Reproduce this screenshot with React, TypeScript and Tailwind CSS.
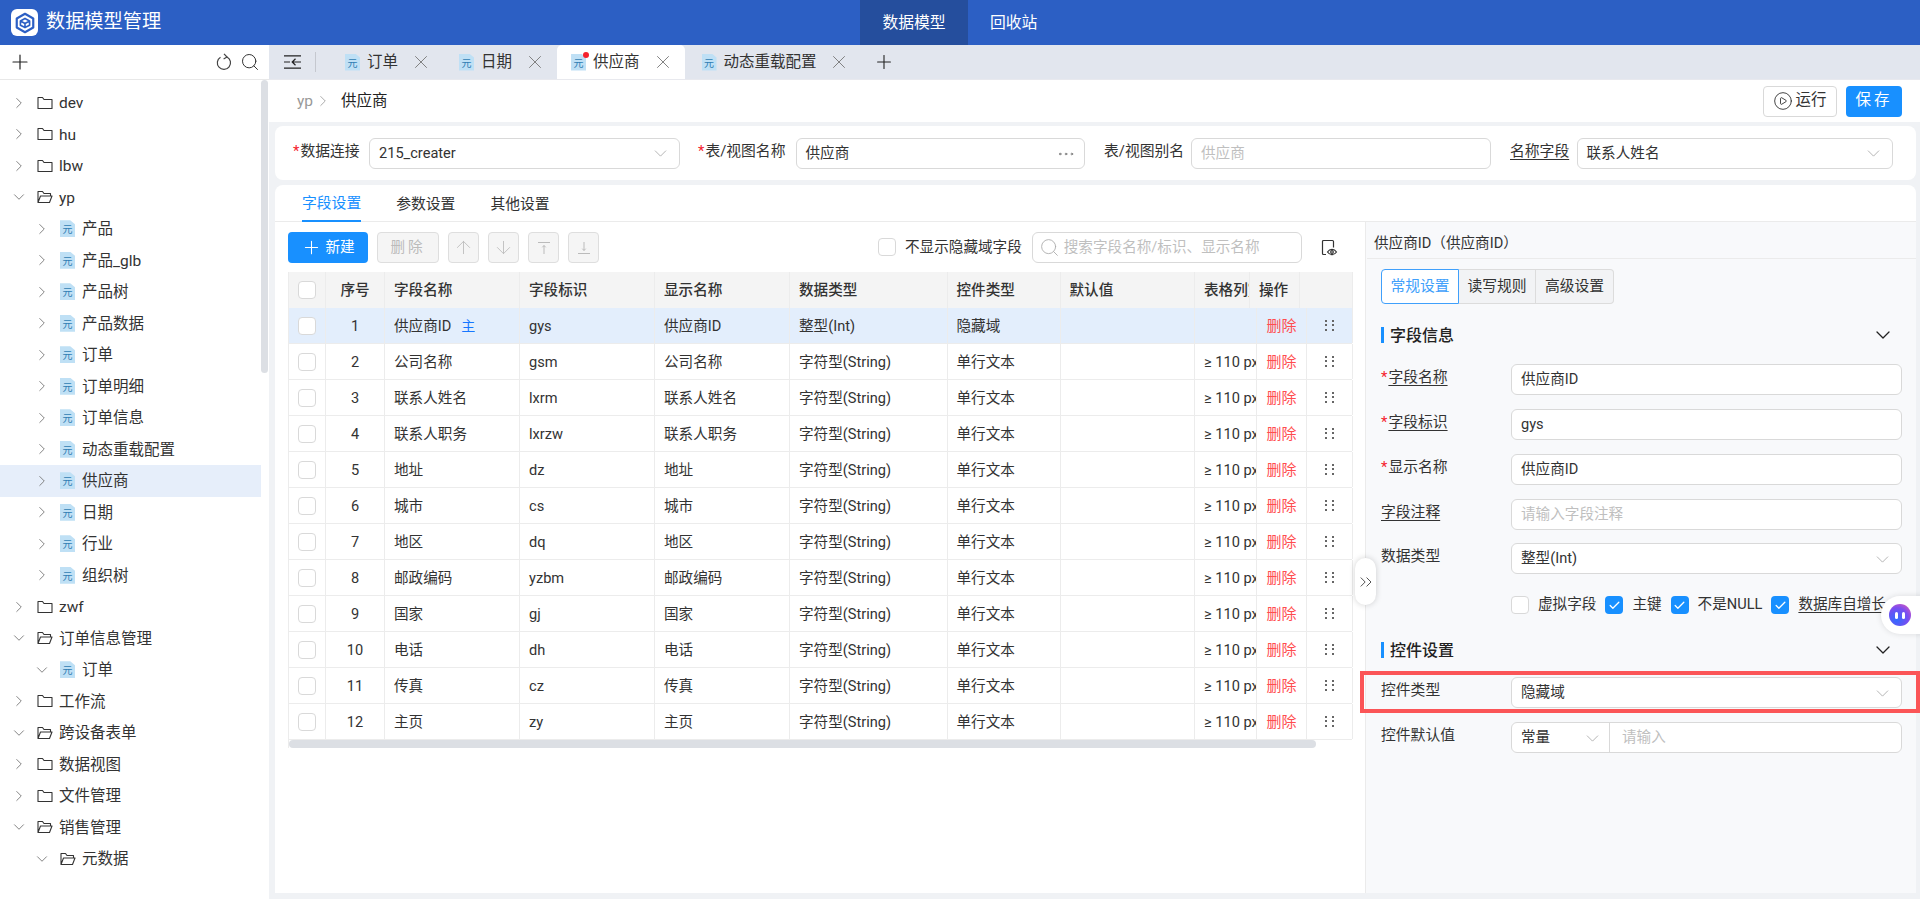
import { ArrowDown, ArrowUp, Check, ChevronDown, ChevronRight, ChevronsRight, CirclePlay, Ellipsis, Plus, Search, X } from "lucide-react";

type TreeItem = { label: string; depth: number; kind: "folder" | "file"; open?: boolean; selected?: boolean };

const tree: TreeItem[] = [
  { label: "dev", depth: 0, kind: "folder" },
  { label: "hu", depth: 0, kind: "folder" },
  { label: "lbw", depth: 0, kind: "folder" },
  { label: "yp", depth: 0, kind: "folder", open: true },
  { label: "产品", depth: 1, kind: "file" },
  { label: "产品_glb", depth: 1, kind: "file" },
  { label: "产品树", depth: 1, kind: "file" },
  { label: "产品数据", depth: 1, kind: "file" },
  { label: "订单", depth: 1, kind: "file" },
  { label: "订单明细", depth: 1, kind: "file" },
  { label: "订单信息", depth: 1, kind: "file" },
  { label: "动态重载配置", depth: 1, kind: "file" },
  { label: "供应商", depth: 1, kind: "file", selected: true },
  { label: "日期", depth: 1, kind: "file" },
  { label: "行业", depth: 1, kind: "file" },
  { label: "组织树", depth: 1, kind: "file" },
  { label: "zwf", depth: 0, kind: "folder" },
  { label: "订单信息管理", depth: 0, kind: "folder", open: true },
  { label: "订单", depth: 1, kind: "file", open: true },
  { label: "工作流", depth: 0, kind: "folder" },
  { label: "跨设备表单", depth: 0, kind: "folder", open: true },
  { label: "数据视图", depth: 0, kind: "folder" },
  { label: "文件管理", depth: 0, kind: "folder" },
  { label: "销售管理", depth: 0, kind: "folder", open: true },
  { label: "元数据", depth: 1, kind: "folder", open: true },
];

const rows = [
  ["供应商ID", "gys"],
  ["公司名称", "gsm"],
  ["联系人姓名", "lxrm"],
  ["联系人职务", "lxrzw"],
  ["地址", "dz"],
  ["城市", "cs"],
  ["地区", "dq"],
  ["邮政编码", "yzbm"],
  ["国家", "gj"],
  ["电话", "dh"],
  ["传真", "cz"],
  ["主页", "zy"],
];

const cell = "h-full flex items-center border-r border-[#ececec] overflow-hidden whitespace-nowrap";

function FolderIcon({ open }: { open?: boolean }) {
  return (
    <svg width="16" height="14" viewBox="0 0 16 14" fill="none" stroke="#333" strokeWidth="1.1" className="shrink-0">
      {open ? (
        <path d="M1 12.500V1.500h4.500l1.500 2h6.500v2.500M1 12.500h11.500L15 6H3.500L1 12.500z" strokeLinejoin="round" />
      ) : (
        <path d="M1 12.500V1.500h4.500l1.500 2h8v9H1z" strokeLinejoin="round" />
      )}
    </svg>
  );
}

function FileIcon() {
  return (
    <span className="shrink-0 w-[15px] h-[17px] bg-[#bfe0f5] flex items-end justify-center pb-[1px] text-[10px] leading-[12px] text-[#2f7db3] [clip-path:polygon(0_0,68%_0,100%_24%,100%_100%,0_100%)]">
      元
    </span>
  );
}

function TreeRow({ item }: { item: TreeItem }) {
  return (
    <div className={`h-[31.500px] flex items-center text-[15.500px] text-[#333] ${item.selected ? "bg-[#e6eefa]" : ""} ${item.depth ? "pl-[32px]" : "pl-[9px]"}`}>
      <span className="w-[20px] shrink-0 flex justify-center">
        {item.open ? <ChevronDown size={18} strokeWidth={1.2} color="#777" /> : <ChevronRight size={18} strokeWidth={1.2} color="#777" />}
      </span>
      <span className="flex ml-[8px] mr-[6px]">{item.kind === "file" ? <FileIcon /> : <FolderIcon open={item.open} />}</span>
      <span className={`pt-[2px] ${item.kind === "file" ? "ml-[1px]" : ""}`}>{item.label}</span>
    </div>
  );
}

function Logo() {
  return (
    <span className="w-[27px] h-[27px] rounded-[6px] bg-white flex items-center justify-center shrink-0">
      <svg width="22" height="22" viewBox="0 0 24 24" fill="none" stroke="#2c5fc4" strokeWidth="2.400" strokeLinejoin="round">
        <path d="M12 2l9 5v10l-9 5-9-5V7l9-5z" />
        <path d="M12 7l5 2.800v4.600L12 17l-5-2.600V9.800L12 7zM7 9.800l5 2.800 5-2.800M12 12.600V17" strokeWidth="1.800" />
      </svg>
    </span>
  );
}

function RefreshIcon() {
  return (
    <svg width="16" height="18" viewBox="0 0 16 18" fill="none" stroke="#444" strokeWidth="1.200">
      <path d="M4.500 4.200A6.600 6.600 0 1 0 11 4" />
      <path d="M8 .800L11 4 7.600 6" strokeLinejoin="round" />
    </svg>
  );
}

function CollapseIcon() {
  return (
    <svg width="17" height="14" viewBox="0 0 17 14" fill="none" stroke="#222" strokeWidth="1.200">
      <path d="M0 .800h17M0 13.200h17M0 7h6M17 7H8.500M11.500 3.800L8.200 7l3.300 3.200" />
    </svg>
  );
}

function EyePhoneIcon() {
  return (
    <svg width="17" height="17" viewBox="0 0 17 17" fill="none" stroke="#333" strokeWidth="1.200">
      <path d="M5 15.500H2.500a1 1 0 0 1-1-1v-12a1 1 0 0 1 1-1h9a1 1 0 0 1 1 1v6" />
      <path d="M6.500 13c1.200-1.800 2.800-2.600 4.500-2.600s3.300.800 4.500 2.600c-1.200 1.800-2.800 2.600-4.500 2.600S7.700 14.800 6.500 13z" />
      <circle cx="11" cy="13" r="1.300" />
    </svg>
  );
}

function ToTopIcon() {
  return (
    <svg width="14" height="14" viewBox="0 0 14 14" fill="none" stroke="#bbb" strokeWidth="1">
      <path d="M1 1.500h12M7 4.500v8.500M5.300 6.300L7 4.500l1.700 1.800" />
    </svg>
  );
}

function ToBottomIcon() {
  return (
    <svg width="14" height="14" viewBox="0 0 14 14" fill="none" stroke="#bbb" strokeWidth="1">
      <path d="M1 12.500h12M7 1v8.500M5.300 7.700L7 9.500l1.700-1.800" />
    </svg>
  );
}

function DragDots() {
  return (
    <span className="grid grid-cols-2 gap-x-[5px] gap-y-[2.500px]">
      {[0, 1, 2, 3, 4, 5].map((i) => (
        <span key={i} className="w-[2px] h-[2px] bg-[#666]" />
      ))}
    </span>
  );
}

function Box({ checked }: { checked?: boolean }) {
  return checked ? (
    <span className="shrink-0 w-[18px] h-[18px] rounded-[4px] bg-[#1890ff] flex items-center justify-center">
      <Check size={13} strokeWidth={2.400} color="#fff" />
    </span>
  ) : (
    <span className="shrink-0 w-[18px] h-[18px] rounded-[4px] border border-[#d9d9d9] bg-white" />
  );
}

function Tab({ label, active, dot, className, closeGap }: { label: string; active?: boolean; dot?: boolean; className: string; closeGap: string }) {
  return (
    <div className={`h-full flex items-center pl-[14px] text-[15.500px] text-[#333] rounded-t-[5px] ${active ? "bg-white" : ""} ${className}`}>
      <span className="relative flex mr-[7px]">
        <FileIcon />
        {dot && <span className="absolute right-[-3px] top-[-2px] w-[6px] h-[6px] rounded-full bg-[#f5222d]" />}
      </span>
      <span className="pt-[1px]">{label}</span>
      <X size={22} strokeWidth={1} color="#777" className={closeGap} />
    </div>
  );
}

function Star() {
  return <span className="text-[#f5222d] mr-[1px]">*</span>;
}

function Field({ className, children }: { className?: string; children: React.ReactNode }) {
  return (
    <div className={`h-[31px] rounded-[6px] border border-[#d9d9d9] bg-white flex items-center pl-[9px] pr-[8px] pt-[1px] text-[14.600px] text-[#333] ${className ?? ""}`}>{children}</div>
  );
}

function SelectField({ value, className }: { value: string; className?: string }) {
  return (
    <Field className={`justify-between ${className ?? ""}`}>
      <span>{value}</span>
      <ChevronDown size={21} strokeWidth={1} color="#aaa" />
    </Field>
  );
}

function SectionTitle({ title, className }: { title: string; className: string }) {
  return (
    <div className={`h-[32px] flex items-center justify-between pr-[7px] ${className}`}>
      <span className="flex items-center gap-[6px] text-[16px] font-medium text-[#222]">
        <span className="w-[3px] h-[16px] bg-[#1890ff]" />
        <span className="pt-[1px]">{title}</span>
      </span>
      <ChevronDown size={24} strokeWidth={1.300} color="#222" />
    </div>
  );
}

function FormRow({ label, star, underline, className, children }: { label: string; star?: boolean; underline?: boolean; className: string; children: React.ReactNode }) {
  return (
    <div className={`flex ${className}`}>
      <div className="w-[130px] shrink-0 pt-[2px] text-[14.800px] leading-[22px] text-[#333]">
        {star && <Star />}
        <span className={underline ? "underline underline-offset-[3px]" : ""}>{label}</span>
      </div>
      {children}
    </div>
  );
}

function IconBtn({ children }: { children: React.ReactNode }) {
  return (
    <span className="w-[31px] h-[31px] rounded-[4px] border border-[#dedede] bg-[#f5f5f5] flex items-center justify-center text-[#bbb]">{children}</span>
  );
}

export default function App() {
  return (
    <div className="relative w-[1920px] h-[899px] overflow-hidden flex flex-col bg-[#f0f2f5] font-['Roboto','Noto_Sans_CJK_SC',sans-serif] text-[#333]">
      <header className="h-[45px] shrink-0 bg-[#2c5fc4] flex items-center pl-[11px] text-white">
        <Logo />
        <span className="ml-[8px] w-[814px] text-[19.200px]">数据模型管理</span>
        <span className="w-[108px] h-full bg-[#254e9d] flex items-center justify-center text-[15.800px]">数据模型</span>
        <span className="ml-[22px] text-[15.800px]">回收站</span>
      </header>

      <div className="flex-1 min-h-0 flex">
        <aside className="relative w-[269px] shrink-0 bg-white flex flex-col">
          <div className="h-[35px] shrink-0 border-b border-[#e8e8e8] flex items-center pl-[8px] pr-[9px]">
            <Plus size={24} strokeWidth={1.200} color="#222" />
            <span className="ml-auto flex"><RefreshIcon /></span>
            <Search size={20} strokeWidth={1.200} color="#333" className="ml-[8px]" />
          </div>
          <div className="w-[261px] pt-[7px]">
            {tree.map((item, i) => (
              <TreeRow key={i} item={item} />
            ))}
          </div>
          <span className="absolute left-[261px] top-[35px] w-[7px] h-[293px] rounded-[4px] bg-[#dcdfe4]" />
        </aside>

        <main className="flex-1 min-w-0 flex flex-col">
          <div className="h-[35px] shrink-0 bg-[#e2e6ee] border-b border-[#e8e9ee] flex items-center">
            <span className="ml-[15px] flex"><CollapseIcon /></span>
            <span className="ml-[14px] mr-[15px] w-px h-[20px] bg-[#c5c8cf]" />
            <Tab label="订单" className="pr-[13px]" closeGap="ml-[12px]" />
            <Tab label="日期" className="pr-[11px]" closeGap="ml-[12px]" />
            <Tab label="供应商" active dot className="pr-[11px] mr-[3px]" closeGap="ml-[12px]" />
            <Tab label="动态重载配置" className="pr-[0px]" closeGap="ml-[11px]" />
            <Plus size={22} strokeWidth={1.200} color="#222" className="ml-[23px]" />
          </div>

          <div className="h-[42px] shrink-0 bg-white flex items-center pl-[28px] pr-[18px]">
            <span className="w-[16px] pt-[1px] text-[15.500px] text-[#999]">yp</span>
            <ChevronRight size={18} strokeWidth={1.100} color="#999" className="ml-[1px]" />
            <span className="ml-[9px] pt-[1px] text-[15.500px] text-[#222]">供应商</span>
            <span className="ml-auto w-[74px] h-[31px] rounded-[4px] border border-[#d9d9d9] flex items-center justify-center gap-[2px] text-[15.500px]">
              <CirclePlay size={20} strokeWidth={1} color="#222" />
              运行
            </span>
            <span className="ml-[9px] w-[56px] h-[31px] rounded-[4px] bg-[#1890ff] flex items-center justify-center text-white text-[15.500px] tracking-[3px]">保存</span>
          </div>

          <div className="h-[54px] shrink-0 mt-[4px] ml-[6px] mr-[4px] rounded-[8px] bg-white flex items-center pl-[18px]">
            <span className="w-[76px] shrink-0 -mt-[4px] text-[14.800px]"><Star />数据连接</span>
            <SelectField value="215_creater" className="w-[311px] shrink-0" />
            <span className="ml-[18px] w-[97.500px] shrink-0 -mt-[4px] text-[14.800px]"><Star />表/视图名称</span>
            <Field className="w-[289.500px] shrink-0 justify-between">
              <span>供应商</span>
              <Ellipsis size={20} strokeWidth={1.100} color="#777" />
            </Field>
            <span className="ml-[19px] w-[87px] shrink-0 -mt-[4px] text-[14.800px]">表/视图别名</span>
            <Field className="w-[300px] shrink-0 text-[#bfbfbf]">供应商</Field>
            <span className="ml-[19px] w-[66.500px] shrink-0 -mt-[4px] text-[14.800px]"><span className="underline underline-offset-[3px]">名称字段</span></span>
            <SelectField value="联系人姓名" className="w-[316.500px] shrink-0" />
          </div>

          <section className="relative flex-1 min-h-0 mt-[5px] mb-[6px] ml-[6px] mr-[4px] rounded-t-[8px] bg-white flex flex-col">
            <div className="h-[37px] shrink-0 border-b border-[#ebebeb] flex pl-[27px] text-[14.800px]">
              <span className="h-[37px] pt-[1px] flex items-center border-b-2 border-[#1890ff] text-[#1890ff]">字段设置</span>
              <span className="ml-[35px] h-[36px] pt-[2px] flex items-center">参数设置</span>
              <span className="ml-[35px] h-[36px] pt-[2px] flex items-center">其他设置</span>
            </div>

            <div className="flex-1 min-h-0 flex">
              <div className="w-[1090px] shrink-0 pl-[13px] pr-[13px] pt-[10px]">
                <div className="h-[31px] flex items-center">
                  <span className="w-[80px] h-[31px] rounded-[4px] bg-[#1890ff] text-white flex items-center justify-center gap-[3px] text-[14.600px]">
                    <Plus size={21} strokeWidth={1.200} />
                    新建
                  </span>
                  <span className="ml-[9px] w-[62px] h-[31px] rounded-[4px] border border-[#dedede] bg-[#f5f5f5] flex items-center justify-center text-[14.600px] tracking-[3px] text-[#bbb]">删除</span>
                  <span className="ml-[9px] flex gap-[9px]">
                    <IconBtn><ArrowUp size={21} strokeWidth={1} /></IconBtn>
                    <IconBtn><ArrowDown size={21} strokeWidth={1} /></IconBtn>
                    <IconBtn><ToTopIcon /></IconBtn>
                    <IconBtn><ToBottomIcon /></IconBtn>
                  </span>
                  <span className="ml-[279px] flex items-center gap-[9px] text-[14.600px]">
                    <Box />
                    不显示隐藏域字段
                  </span>
                  <span className="ml-[10px] w-[270px] h-[31px] rounded-[6px] border border-[#d9d9d9] flex items-center pl-[6px] gap-[4px] text-[14.600px] text-[#bfbfbf]">
                    <Search size={21} strokeWidth={1} color="#aaa" />
                    搜索字段名称/标识、显示名称
                  </span>
                  <span className="ml-[19px] flex"><EyePhoneIcon /></span>
                </div>

                <div className="mt-[9px] w-[1064px] border-l border-[#ececec] text-[14.600px]">
                  <div className="h-[36px] bg-[#f4f4f4] grid grid-cols-[37px_59px_135px_135px_135px_157.500px_113px_134.500px_55px_49.500px_53.500px] font-medium text-[#333]">
                    <div className={`${cell} justify-center`}><Box /></div>
                    <div className={`${cell} justify-center pt-[1px]`}>序号</div>
                    {["字段名称", "字段标识", "显示名称", "数据类型", "控件类型", "默认值", "表格列宽", "操作"].map((h) => (
                      <div key={h} className={`${cell} pl-[9px] pt-[1px]`}>{h}</div>
                    ))}
                    <div className={cell} />
                  </div>
                  {rows.map(([name, id], i) => (
                    <div key={id} className={`h-[36px] border-b border-[#ececec] grid grid-cols-[37px_59px_135px_135px_135px_157.500px_113px_134.500px_62px_50px_46px] ${i === 0 ? "bg-[#e3eefc]" : "bg-white"}`}>
                      <div className={`${cell} justify-center`}><Box /></div>
                      <div className={`${cell} justify-center pt-[2px]`}>{i + 1}</div>
                      <div className={`${cell} pl-[9px] pt-[2px]`}>
                        {name}
                        {i === 0 && <span className="ml-[10px] text-[14px] text-[#1677ff]">主</span>}
                      </div>
                      <div className={`${cell} pl-[9px] pt-[2px]`}>{id}</div>
                      <div className={`${cell} pl-[9px] pt-[2px]`}>{name}</div>
                      <div className={`${cell} pl-[9px] pt-[2px]`}>{i === 0 ? "整型(Int)" : "字符型(String)"}</div>
                      <div className={`${cell} pl-[9px] pt-[2px]`}>{i === 0 ? "隐藏域" : "单行文本"}</div>
                      <div className={cell} />
                      <div className={`${cell} pl-[9px] pt-[2px]`}>{i === 0 ? "" : "≥ 110 px"}</div>
                      <div className={`${cell} justify-center pt-[2px] text-[15px] text-[#ff4d4f]`}>删除</div>
                      <div className={`${cell} justify-center pb-[1px]`}><DragDots /></div>
                    </div>
                  ))}
                  <div className="h-[8px] w-[1027px] rounded-[4px] bg-[#dcdfe4]" />
                </div>
              </div>

              <div className="flex-1 min-w-0 border-l border-[#ebebeb] bg-[#f8f9fb] pl-[15px] pr-[14px]">
                <div className="h-[37px] -ml-[14px] -mr-[14px] pl-[7px] pt-[7px] border-b border-[#ebebeb] flex items-center text-[14.600px]">供应商ID（供应商ID）</div>
                <div className="mt-[10px] flex h-[35px] text-[14.800px]">
                  <span className="w-[78px] rounded-l-[4px] border border-[#40a0fb] bg-white text-[#40a0fb] flex items-center justify-center">常规设置</span>
                  <span className="w-[77px] border-y border-r border-[#dcdcdc] bg-[#f2f3f5] flex items-center justify-center">读写规则</span>
                  <span className="w-[78px] rounded-r-[4px] border-y border-r border-[#dcdcdc] bg-[#f2f3f5] flex items-center justify-center">高级设置</span>
                </div>

                <SectionTitle title="字段信息" className="mt-[15px]" />
                <FormRow label="字段名称" star underline className="mt-[13px]"><Field className="flex-1">供应商ID</Field></FormRow>
                <FormRow label="字段标识" star underline className="mt-[14px]"><Field className="flex-1">gys</Field></FormRow>
                <FormRow label="显示名称" star className="mt-[14px]"><Field className="flex-1">供应商ID</Field></FormRow>
                <FormRow label="字段注释" underline className="mt-[14px]"><Field className="flex-1 text-[#bfbfbf]">请输入字段注释</Field></FormRow>
                <FormRow label="数据类型" className="mt-[13px]"><SelectField value="整型(Int)" className="flex-1" /></FormRow>

                <div className="mt-[22px] pl-[130px] h-[18px] flex items-center text-[14.600px] whitespace-nowrap">
                  <Box />
                  <span className="ml-[9px]">虚拟字段</span>
                  <span className="ml-[9px]"><Box checked /></span>
                  <span className="ml-[9px]">主键</span>
                  <span className="ml-[9px]"><Box checked /></span>
                  <span className="ml-[9px]">不是NULL</span>
                  <span className="ml-[9px]"><Box checked /></span>
                  <span className="ml-[9px] underline underline-offset-[3px]">数据库自增长</span>
                </div>

                <SectionTitle title="控件设置" className="mt-[20px]" />
                <FormRow label="控件类型" className="mt-[11px]"><SelectField value="隐藏域" className="flex-1" /></FormRow>
                <FormRow label="控件默认值" className="mt-[14px]">
                  <div className="flex-1 h-[31px] rounded-[6px] border border-[#d9d9d9] bg-white flex text-[14.600px]">
                    <span className="w-[98px] border-r border-[#d9d9d9] flex items-center justify-between pl-[9px] pr-[6px] pt-[1px]">
                      常量
                      <ChevronDown size={21} strokeWidth={1} color="#aaa" />
                    </span>
                    <span className="pl-[12px] pt-[1px] flex items-center text-[#bfbfbf]">请输入</span>
                  </div>
                </FormRow>
              </div>
            </div>

            <span className="absolute left-[1080px] top-[373px] w-[21px] h-[47px] rounded-full bg-white shadow-[0_0_6px_rgba(0,0,0,0.18)] flex items-center justify-center">
              <ChevronsRight size={20} strokeWidth={1.100} color="#444" />
            </span>
          </section>
        </main>
      </div>

      <div className="absolute left-[1360px] top-[671px] w-[560px] h-[42px] border-4 border-[#fb5557]" />

      <div className="absolute left-[1881px] top-[596px] w-[45px] h-[38px] rounded-l-[19px] bg-white shadow-[0_0_6px_rgba(0,0,0,0.12)] flex items-center pl-[8px]">
        <span className="w-[22px] h-[22px] rounded-full blur-[0.4px] bg-[radial-gradient(circle_at_35%_70%,#2f6bff,#7a4df0_55%,#f05cb0)] flex items-center justify-center gap-[4px]">
          <span className="w-[3px] h-[7px] rounded-full bg-white" />
          <span className="w-[3px] h-[7px] rounded-full bg-white" />
        </span>
      </div>
    </div>
  );
}
